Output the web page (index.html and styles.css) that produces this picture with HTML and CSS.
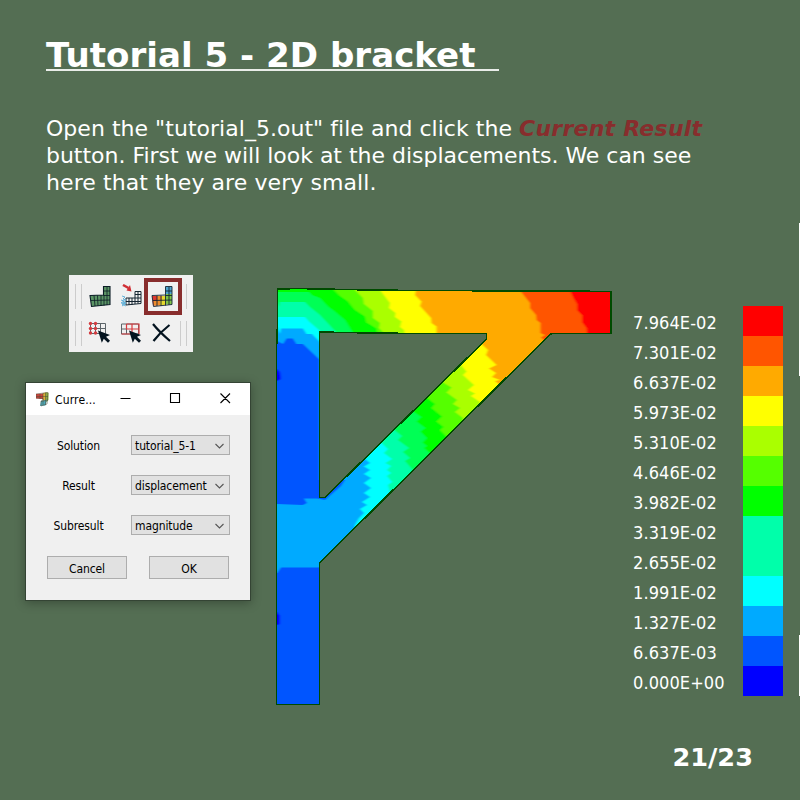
FILE: index.html
```html
<!DOCTYPE html>
<html lang="en">
<head>
<meta charset="utf-8">
<title>Tutorial 5 - 2D bracket</title>
<link rel="stylesheet" href="styles.css">
</head>
<body>
<main class="slide">
  <header class="intro">
    <h1 class="title">Tutorial 5 - 2D bracket&nbsp;&nbsp;</h1>
    <p class="text">Open the "tutorial_5.out" file and click the <em class="hl">Current Result</em><br><span class="tight">button. First we will look at the displacements. We can see</span><br><span class="loose">here that they are very small.</span></p>
  </header>

  <section class="stage">
    <div class="controls">
      <div class="toolbar">
        <div class="tool-row">
          <span class="grip"></span>
          <span class="tool"><svg viewBox="0 0 24 24"><path d="M2 11.5L15.5 11V2.5h6.500v18L3.500 22.500z" fill="#5b9465" stroke="#0b1c26" stroke-width="1.100"/><path d="M3 16.500l19-.5M6 11.500l1 10.500M9.500 11.500l.5 10.500M13 11v11M16 11v10.500M19 3v18M15.500 7H22M15.500 11.500H22" stroke="#0b1c26" stroke-width=".8" fill="none"/></svg></span>
          <span class="tool"><svg viewBox="0 0 24 24"><path d="M7 14h9V7.500h6V19.500L7 21zM16 14h6M19 7.500v12M7 17.500h15M10 14v7M13 14v7M16 14v6M16 10.500h6" fill="none" stroke="#142430"/><path d="M4 1l5.500 3" stroke="#d02f35" stroke-width="2.500"/><path d="M12.500 7.500L7.500 6.500l3.500-5.500z" fill="#d02f35"/><path d="M3 12l3 1-2 2 3 1-3 2 3 1-4 1 4 2M2 16l3 1-3 2 5 0M3 22l3-2" fill="none" stroke="#63b1d8"/></svg></span>
          <span class="tool tool-on"><svg viewBox="0 0 24 24"><path d="M2 12h5v9.500H3z" fill="#df3831"/><path d="M7 12h5v9.500H3.500V17H7z" fill="#ef8d2d"/><path d="M12 12h4v9h-6v-4h2z" fill="#e5d82e"/><path d="M16 9h6v11.500h-6z" fill="#7fc348"/><path d="M15.500 2.500H22V10h-6.500z" fill="#4da4cf"/><path d="M2 11.500L15.500 11V2.500h6.500v18L3.500 22.500zM3 16.500l19-.5M7 11.500V22M11 11.500V22M15.500 11v10.500M19 3v18M15.500 7H22M15.500 11.500H22" stroke="#152633" stroke-width=".9" fill="none"/></svg></span>
          <span class="grip grip-end grip-one"></span>
        </div>
        <div class="tool-row">
          <span class="grip"></span>
          <span class="tool"><svg viewBox="0 0 24 24"><path d="M2.500 2.500h15v10h-15zM7.500 2.500v10M12.500 2.500v10M2.500 7.500h15" fill="none" stroke="#5c6469"/><g fill="#d33b3f"><circle cx="2.500" cy="2.500" r="1.700"/><circle cx="7.500" cy="2.500" r="1.700"/><circle cx="2.500" cy="7.500" r="1.700"/><circle cx="7.500" cy="7.500" r="1.700"/><circle cx="2.500" cy="12" r="1.700"/><circle cx="7.500" cy="12" r="1.700"/></g><path d="M10 9.500l12 4.500-4 1.800 4 4-2 2-4.200-4-2 4z" fill="#03131f"/></svg></span>
          <span class="tool"><svg viewBox="0 0 24 24"><path d="M2.500 3h17v10h-17zM7.500 3v10M2.500 8h5" fill="none" stroke="#5c6469"/><path d="M7.500 3h12.500v10M7.500 3v5H20M13 3v10M2.500 13H13" fill="none" stroke="#d83a3e" stroke-width="1.200"/><path d="M10 9.500l12 4.500-4 1.800 4 4-2 2-4.200-4-2 4z" fill="#03131f"/></svg></span>
          <span class="tool"><svg viewBox="0 0 24 24"><path d="M3 3c4 5 10 11 17 17M19.500 4C13 9 8 14 3.500 20" fill="none" stroke="#03131f" stroke-width="2.200"/></svg></span>
          <span class="grip grip-end"></span>
        </div>
      </div>

      <div class="dialog">
        <div class="titlebar">
          <svg class="app" viewBox="0 0 14 15"><path d="M0 2l8-.5V7L0 6.500z" fill="#c7453d"/><path d="M7 1l3-.5V10L7 9z" fill="#dcae38"/><path d="M9.500 0L12.500 1v7l-2 2-1-.5z" fill="#8dae43"/><path d="M5 9l6-1.500-1.500 6L4 14z" fill="#4faabb"/><path d="M0 2l12-1.500L11 12l-6 2V9l2-1V6.500L0 6zM4 2v5M7 1v12M9.500 1v12M0 4.500h12M5 9.500l7-1.500" fill="none" stroke="#4c4a36" stroke-width=".5"/></svg>
          <span class="caption">Curre...</span>
          <svg class="winbtns" viewBox="0 0 112 12"><path d="M.5 5.500h10M50.500 .5h9v9h-9zM100.500 .5l9.500 9.500M110 .5l-9.500 9.500" fill="none" stroke="#000" stroke-width="1.100"/></svg>
        </div>
        <div class="field"><span class="label">Solution</span><span class="combo">tutorial_5-1<svg viewBox="0 0 9 6"><path d="M.5 1l4 4 4-4" fill="none" stroke="#555" stroke-width="1.100"/></svg></span></div>
        <div class="field"><span class="label">Result</span><span class="combo">displacement<svg viewBox="0 0 9 6"><path d="M.5 1l4 4 4-4" fill="none" stroke="#555" stroke-width="1.100"/></svg></span></div>
        <div class="field"><span class="label">Subresult</span><span class="combo">magnitude<svg viewBox="0 0 9 6"><path d="M.5 1l4 4 4-4" fill="none" stroke="#555" stroke-width="1.100"/></svg></span></div>
        <div class="actions"><span class="btn">Cancel</span><span class="btn">OK</span></div>
      </div>
    </div>

    <svg class="bracket" viewBox="270 280 350 430">
      <defs>
        <path id="outline" d="M277.500 289L298 288.500 343 289.500 411 290.500 557 291 611 291.500V333.500H551.500L547 337.500 319.500 563V704.500H276.500V349L277.500 325zM319.500 332L343 332.500 411 333.500H486.500V339L325 497.500H319.500z"/>
        <clipPath id="shape"><use href="#outline" clip-rule="evenodd"/></clipPath>
        <filter id="soft" x="0" y="0" width="1" height="1"><feGaussianBlur stdDeviation=".8 .4"/></filter>
      </defs>
      <g clip-path="url(#shape)"><g filter="url(#soft)">
        <path fill="#f00" d="M260 270h370v450H260z"/>
        <path fill="#f50" d="M570 270V290.700L573.500 298 577 304V310L582 315V322L586.500 328 587 334V345L590 720H260V270z"/>
        <path fill="#fa0" d="M518 270L520 290.500 530 303V308L536 315 536.500 320 540.500 323V333L545 335 541 337.500 545 341V720H260V270z"/>
        <path fill="#ff0" d="M416 270V290L415 295 421.500 301.500 420 306 431 318 431.500 323 436.500 326.500V335L481.500 344 488 350 486 355 496.500 365 489 368.500 496 373 492 377 500 380 495 381 501 386V720H260V270z"/>
        <path fill="#af0" d="M375 270L380 290 390 303 389 308 395.500 313 395 317 401.500 321.500 400 327 404 330 405 335 461 365 466.500 371.500 463 375 474 385 468 390 475 393.500 471 396 480 402V720H260V270z"/>
        <path fill="#5f0" d="M346 270L354 289 363 298 364 304 373 311V318L380 323 379 328 385 334 443 382.500 451.500 387.500 446.500 392.500 457 400 453 404 460 408 455 412 463 418V720H260V270z"/>
        <path fill="#0f0" d="M325 270L333 289 340 296 348 301.500 355 310 365 316.500 366.500 322.500 376.500 328.500 378 334 427 398 435 404 431.500 408 442 416.500 436.500 421.500 443.500 427 440 430 447 437V720H260V270z"/>
        <path fill="#0f5" d="M260 292H309L312 295 320 298 328 306.500 333 310 345 320 353 333 413 411.500 421.500 417 416.500 421.500 425.500 428 420.500 431.500 427 438 422.500 442.500 427 446 424 448 431 454V720H260z"/>
        <path fill="#0fa" d="M260 300H276L279 307 280 302H305L310 307 320 315 337 333 395 430.500 402 436 398 440 409 448 403 452 410 458 405 461 412 469V720H260z"/>
        <path fill="#0ff" d="M260 317H305L309 321.500 319 330 325 340 381.500 443 388 449 384 453 392 459 385.500 463 391 466 387 470 391 473 387 476 392 482 388 485 390 492V720H260z"/>
        <path fill="#0af" d="M260 325L277 327 280 334 281 328.500H303L306.500 334 312 334 319.500 341.500 340 400 367.500 455 365 459 370 463 364 466.500 370 470 364 474 371 478 364 483 371 488 364 493 370 497 362 502 367 505 360 509 364 513 359 518 355 525V720H260z"/>
        <path fill="#05f" d="M260 335L277 341 283 344 286.500 338.500H293L296.500 344H303L319.500 359.500V480H345L341 486 325 500 318 498.500H304L307 503 303 505 277 504H260zM260 573H277L281 567.500H318L330 566V720H260z"/>
        <path fill="#00f" d="M260 369h17l3 3 1 7-4 2h-17zM260 612h17l3 4v8l-3 1h-17z"/>
      </g></g>
      <use href="#outline" class="edge"/>
    </svg>

    <div class="legend">
      <div class="entry"><span>7.964E-02</span><i class="c1"></i></div>
      <div class="entry"><span>7.301E-02</span><i class="c2"></i></div>
      <div class="entry"><span>6.637E-02</span><i class="c3"></i></div>
      <div class="entry"><span>5.973E-02</span><i class="c4"></i></div>
      <div class="entry"><span>5.310E-02</span><i class="c5"></i></div>
      <div class="entry"><span>4.646E-02</span><i class="c6"></i></div>
      <div class="entry"><span>3.982E-02</span><i class="c7"></i></div>
      <div class="entry"><span>3.319E-02</span><i class="c8"></i></div>
      <div class="entry"><span>2.655E-02</span><i class="c8"></i></div>
      <div class="entry"><span>1.991E-02</span><i class="c9"></i></div>
      <div class="entry"><span>1.327E-02</span><i class="c10"></i></div>
      <div class="entry"><span>6.637E-03</span><i class="c11"></i></div>
      <div class="entry"><span>0.000E+00</span><i class="c12"></i></div>
    </div>
    <div class="rail"><span class="rail-a"></span><span class="rail-b"></span></div>
  </section>

  <footer class="page">21/23</footer>
</main>
</body>
</html>
```
FILE: styles.css
```css
* { box-sizing: border-box; }
body { margin: 0; }
.slide {
  width: 800px; height: 800px; overflow: hidden;
  background: #546e53; color: #fff;
  font-family: "DejaVu Sans", sans-serif;
  display: flex; flex-direction: column;
}
.intro { height: 215px; padding: 35px 0 0 46px; }
.title {
  width: 453px; height: 36px; margin: 0; border-bottom: 2px solid #e9ede9;
  font-size: 34.1px; line-height: 41px; white-space: nowrap;
}
.text { margin: 44px 0 0; font-size: 22px; line-height: 27.2px; letter-spacing: .03px; white-space: nowrap; }
.tight { letter-spacing: -.02px; }
.loose { letter-spacing: .08px; }
.hl { color: #882d2d; font-weight: bold; letter-spacing: .25px; }

.stage { display: flex; height: 500px; }
.controls { width: 270px; padding: 60px 0 0 25px; flex: none; }
.toolbar {
  width: 124px; height: 77px; margin-left: 44px; padding: 3px 0;
  background: #f0f0f0; display: flex; flex-direction: column;
}
.tool-row { height: 37px; display: flex; align-items: center; padding-left: 6px; }
.grip { width: 7px; height: 25px; margin-right: 3px; border: solid #ccc; border-width: 0 1px; }
.grip-end { margin: 0 0 0 2px; }
.grip-one { border-left: 0; }
.tool { width: 31px; height: 37px; padding: 6px 4px 0 3px; }
.tool svg { display: block; width: 24px; height: 24px; }
.tool-on { width: 38px; margin: 0 -4px 0 -3px; border: 4px solid #882d2d; padding: 2px 0 0 2px; }

.dialog {
  width: 226px; height: 219px; margin-top: 30px;
  background: #f0f0f0; border: 1px solid #344434; color: #000;
  box-shadow: 0 2px 10px rgba(0,0,0,.3);
  font-family: "DejaVu Sans Condensed", "DejaVu Sans", sans-serif;
  font-stretch: condensed; font-size: 12px; letter-spacing: -.1px;
}
.titlebar { height: 32px; background: #fff; display: flex; align-items: center; padding-left: 10px; margin-bottom: 20px; }
.app { width: 14px; height: 15px; margin-right: 5px; }
.caption { width: 65px; padding-top: 2px; letter-spacing: .15px; }
.winbtns { width: 112px; height: 12px; }
.field { display: flex; height: 20px; margin-bottom: 20px; align-items: center; }
.label { width: 105px; padding-top: 2px; text-align: center; }
.combo {
  width: 99px; height: 20px; padding: 2px 5px 0 3px; border: 1px solid #adadad; background: #e1e1e1;
  display: flex; align-items: center; justify-content: space-between;
}
.combo svg { width: 9px; height: 6px; }
.actions { display: flex; gap: 22px; padding: 1px 0 0 21px; }
.btn { width: 80px; height: 23px; border: 1px solid #adadad; background: #e1e1e1; text-align: center; line-height: 24px; }

.bracket { width: 350px; height: 430px; margin-top: 65px; flex: none; }
.edge { fill: none; stroke: #004b00; stroke-width: 1.6; shape-rendering: crispEdges; }

.legend {
  width: 163px; margin-top: 91px; padding-left: 13px; flex: none;
  font-family: "DejaVu Sans Condensed", "DejaVu Sans", sans-serif;
  font-stretch: condensed; font-size: 18px; letter-spacing: .1px;
}
.entry { display: flex; height: 30px; line-height: 33px; }
.entry span { width: 110px; }
.entry i { width: 40px; }
.c1 { background: #f00; } .c2 { background: #f50; } .c3 { background: #fa0; }
.c4 { background: #ff0; } .c5 { background: #af0; } .c6 { background: #5f0; }
.c7 { background: #0f0; } .c8 { background: #0fa; } .c9 { background: #0ff; }
.c10 { background: #0af; } .c11 { background: #05f; } .c12 { background: #00f; }
.rail { width: 1px; margin-left: 16px; padding-top: 8px; }
.rail span { display: block; width: 1px; background: #fff; }
.rail-a { height: 153px; margin-bottom: 259px; }
.rail-b { height: 61px; }

.page { padding: 26px 47px 0 0; text-align: right; font-weight: bold; font-size: 25.6px; line-height: 33px; }
```
